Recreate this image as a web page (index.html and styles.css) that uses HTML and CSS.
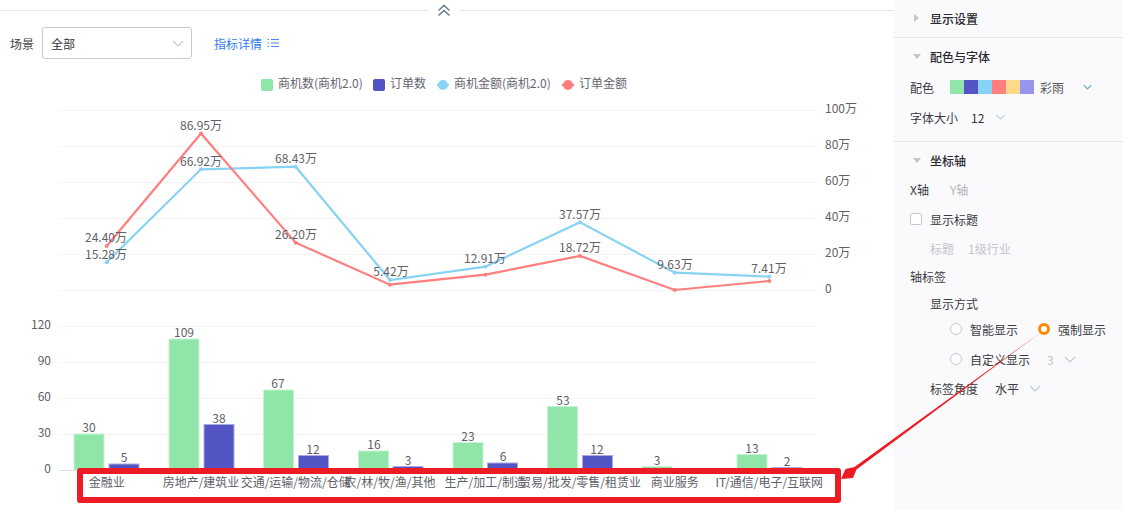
FILE: index.html
```html
<!DOCTYPE html>
<html lang="zh">
<head>
<meta charset="utf-8">
<title>图表</title>
<link rel="stylesheet" href="styles.css">
</head>
<body>
<div class="page">
  <main class="main">
    <div class="collapse">
      <span class="collapse-line line-left"></span>
      <svg class="collapse-icon" viewBox="0 0 14 14" width="14" height="14"><path d="M1.500 6.500 7 1.500l5.500 5M1.500 11.500 7 6.500l5.500 5"/></svg>
      <span class="collapse-line line-right"></span>
    </div>
    <div class="toolbar">
      <span class="scene-label">场景</span>
      <div class="select"><span>全部</span>
        <svg class="chev" viewBox="0 0 12 7" width="12" height="7"><path d="M1 1l5 5 5-5"/></svg>
      </div>
      <a class="detail">指标详情
        <svg viewBox="0 0 12 10" width="12" height="10"><path d="M4 1.500h8M4 5h8M4 8.500h8M0.500 1.500h1.500M0.500 5h1.500M0.500 8.500h1.500"/></svg>
      </a>
    </div>
    <svg class="chart" viewBox="0 0 894 440" width="894" height="440">
      <!-- chart coordinates = page coordinates shifted up by 70px -->
      <g transform="translate(0 -70)">
        <g class="legend">
          <rect x="261" y="79" width="12" height="12" rx="2" fill="#8fe6a8"/><text x="278" y="88">商机数(商机2.0)</text>
          <rect x="373" y="79" width="12" height="12" rx="2" fill="#5355c5"/><text x="390" y="88">订单数</text>
          <path d="M437 85h12" class="lg-blue"/><circle cx="443" cy="85" r="5" fill="#88d3f3"/><text x="454" y="88">商机金额(商机2.0)</text>
          <path d="M562 85h12" class="lg-red"/><circle cx="568" cy="85" r="5" fill="#ff7f7f"/><text x="579" y="88">订单金额</text>
        </g>
        <g class="grid">
          <path d="M59 110.500H816M59 146.500H816M59 182.500H816M59 218.500H816M59 254.500H816M59 290.500H816"/>
          <path d="M59 326.500H816M59 362.500H816M59 398.500H816M59 434.500H816"/>
        </g>
        <path class="base" d="M59 470.500H816"/>
        <g class="axis axis-r">
          <text x="825" y="113">100万</text><text x="825" y="149">80万</text><text x="825" y="185">60万</text>
          <text x="825" y="221">40万</text><text x="825" y="257">20万</text><text x="825" y="293">0</text>
        </g>
        <g class="axis axis-l">
          <text x="51" y="329">120</text><text x="51" y="365">90</text><text x="51" y="401">60</text>
          <text x="51" y="437">30</text><text x="51" y="473">0</text>
        </g>
        <polyline class="line-blue" points="106.700,262.300 201,169.300 295.700,166.700 390,280 485.300,266.700 580,222.300 674.700,272.700 769.300,276.700"/>
        <polyline class="line-red" points="106.700,246 201,133.500 295.700,242.700 390,284.700 485.300,274.700 580,256 674.700,290 769.300,281"/>
        <g fill="#88d3f3">
          <circle cx="106.700" cy="262.300" r="2"/><circle cx="201" cy="169.300" r="2"/><circle cx="295.700" cy="166.700" r="2"/><circle cx="390" cy="280" r="2"/>
          <circle cx="485.300" cy="266.700" r="2"/><circle cx="580" cy="222.300" r="2"/><circle cx="674.700" cy="272.700" r="2"/><circle cx="769.300" cy="276.700" r="2"/>
        </g>
        <g fill="#ff7f7f">
          <circle cx="106.700" cy="246" r="2"/><circle cx="201" cy="133.500" r="2"/><circle cx="295.700" cy="242.700" r="2"/><circle cx="390" cy="284.700" r="2"/>
          <circle cx="485.300" cy="274.700" r="2"/><circle cx="580" cy="256" r="2"/><circle cx="674.700" cy="290" r="2"/><circle cx="769.300" cy="281" r="2"/>
        </g>
        <g class="val">
          <text x="106" y="242">24.40万</text><text x="106" y="259">15.28万</text>
          <text x="201" y="130">86.95万</text><text x="201" y="166">66.92万</text>
          <text x="296" y="163">68.43万</text><text x="296" y="239">26.20万</text>
          <text x="391" y="276">5.42万</text><text x="485" y="263">12.91万</text>
          <text x="580" y="219">37.57万</text><text x="580" y="252">18.72万</text>
          <text x="675" y="269">9.63万</text><text x="769" y="273">7.41万</text>
        </g>
        <g class="bars-a">
          <rect x="74" y="434" width="30" height="36"/><rect x="169" y="339" width="30" height="131"/>
          <rect x="263.500" y="390" width="30" height="80"/><rect x="358.500" y="451" width="30" height="19"/>
          <rect x="453" y="442.500" width="30" height="27.500"/><rect x="547.500" y="406.500" width="30" height="63.500"/>
          <rect x="642" y="466.500" width="30" height="3.500"/><rect x="737" y="454.500" width="30" height="15.500"/>
        </g>
        <g class="bars-b">
          <rect x="109" y="464" width="30" height="6"/><rect x="204" y="424.500" width="30" height="45.500"/>
          <rect x="298.500" y="455.500" width="30" height="14.500"/><rect x="393" y="466.500" width="30" height="3.500"/>
          <rect x="487.500" y="463" width="30" height="7"/><rect x="582.500" y="455.500" width="30" height="14.500"/>
          <rect x="772" y="467.500" width="30" height="2.500"/>
        </g>
        <g class="val">
          <text x="89" y="432">30</text><text x="124" y="462">5</text>
          <text x="184" y="337">109</text><text x="219" y="423">38</text>
          <text x="278" y="388">67</text><text x="313" y="454">12</text>
          <text x="374" y="449">16</text><text x="408" y="465">3</text>
          <text x="468" y="441">23</text><text x="503" y="461">6</text>
          <text x="563" y="405">53</text><text x="597" y="454">12</text>
          <text x="657" y="465">3</text><text x="752" y="453">13</text><text x="787" y="466">2</text>
        </g>
        <g class="cat">
          <text x="106.700" y="487">金融业</text><text x="201" y="487">房地产/建筑业</text>
          <text x="295.700" y="487">交通/运输/物流/仓储</text><text x="390" y="487">农/林/牧/渔/其他</text>
          <text x="485.300" y="487">生产/加工/制造</text><text x="580" y="487">贸易/批发/零售/租赁业</text>
          <text x="674.700" y="487">商业服务</text><text x="769.300" y="487">IT/通信/电子/互联网</text>
        </g>
      </g>
    </svg>
  </main>
  <aside class="panel">
    <section class="sect sect-first">
      <h3 class="sect-title"><span class="tri-r"></span>显示设置</h3>
    </section>
    <section class="sect sect-color">
      <h3 class="sect-title"><span class="tri-d"></span>配色与字体</h3>
      <div class="row row-color">
        <span class="lbl">配色</span>
        <div class="swatches"><i class="s1"></i><i class="s2"></i><i class="s3"></i><i class="s4"></i><i class="s5"></i><i class="s6"></i></div>
        <span class="scheme">彩雨</span>
        <svg class="chev blue" viewBox="0 0 12 7" width="9" height="6"><path d="M1 1l5 5 5-5"/></svg>
      </div>
      <div class="row row-size">
        <span class="lbl">字体大小</span><span class="size">12</span>
        <svg class="chev" viewBox="0 0 12 7" width="11" height="6"><path d="M1 1l5 5 5-5"/></svg>
      </div>
    </section>
    <section class="sect-axis">
      <h3 class="sect-title"><span class="tri-d"></span>坐标轴</h3>
      <div class="row tabs"><span class="tab-on">X轴</span><span class="tab-off">Y轴</span></div>
      <div class="row check-row"><span class="check"></span><span class="lbl">显示标题</span></div>
      <div class="row title-row"><span>标题</span><span>1级行业</span></div>
      <div class="row axis-label"><span class="lbl">轴标签</span></div>
      <div class="row mode"><span class="lbl">显示方式</span></div>
      <div class="row radios">
        <span class="radio"></span><span class="lbl r-text">智能显示</span>
        <span class="radio on"></span><span class="lbl">强制显示</span>
      </div>
      <div class="row radios radios-2">
        <span class="radio"></span><span class="lbl r-text2">自定义显示</span><span class="num">3</span>
        <svg class="chev" viewBox="0 0 12 7" width="12" height="7"><path d="M1 1l5 5 5-5"/></svg>
      </div>
      <div class="row angle">
        <span class="lbl">标签角度</span><span class="lbl angle-val">水平</span>
        <svg class="chev" viewBox="0 0 12 7" width="12" height="7"><path d="M1 1l5 5 5-5"/></svg>
      </div>
    </section>
  </aside>
  <div class="redbox"></div>
  <svg class="arrow" viewBox="0 0 1123 510" width="1123" height="510">
    <polygon points="1044,330 856.500,469.500 853,478 841,479 845.500,469 854.500,467"/>
  </svg>
</div>
</body>
</html>
```
FILE: styles.css
```css
* { box-sizing: border-box; }
html, body { margin: 0; padding: 0; background: #fff; }
body { font-family: "Noto Sans CJK SC", "Noto Sans", sans-serif; font-size: 12px; color: #333; overflow: hidden; }
.page { position: relative; display: flex; width: 1123px; height: 510px; overflow: hidden; }
.main { width: 894px; flex: none; }
.collapse { display: flex; align-items: center; height: 21px; gap: 8px; }
.collapse-line { height: 1px; background: #e3e3ec; }
.line-left { flex: none; width: 429px; }
.line-right { flex: 1; }
.collapse-icon { flex: none; fill: none; stroke: #5d7284; stroke-width: 1.300; }
.toolbar { display: flex; align-items: center; height: 49px; padding: 0 0 5px 10px; }
.scene-label { margin-right: 8px; color: #444; }
.select { width: 150px; height: 32px; border: 1px solid #c8c8d4; border-radius: 3px; display: flex; align-items: center; justify-content: space-between; padding: 0 7px 0 8px; color: #333; }
.detail { display: flex; align-items: center; gap: 5px; margin-left: 22px; color: #2f7bf5; }
.detail svg { fill: none; stroke: #4e83f5; stroke-width: 1; }
.chev { fill: none; stroke: #c4c8d4; stroke-width: 1.200; flex: none; }
.chev.blue { stroke: #6ea4c8; stroke-width: 1.600; }
.chart { display: block; }
.chart text { font-family: "Noto Sans CJK SC", "Noto Sans", sans-serif; font-size: 12px; fill: #5f5f68; }
.legend text { fill: #666670; }
.lg-blue { stroke: #88d3f3; stroke-width: 2; }
.lg-red { stroke: #ff7f7f; stroke-width: 2; }
.grid path { stroke: #f3f3f6; stroke-width: 1; fill: none; }
.base { stroke: #dcdce8; stroke-width: 1; fill: none; }
.axis-l text { text-anchor: end; }
.line-blue { fill: none; stroke: #88d3f3; stroke-width: 2.200; }
.line-red { fill: none; stroke: #ff7f7f; stroke-width: 2.200; }
.val text, .cat text { text-anchor: middle; }
.bars-a rect { fill: #8fe6a8; stroke: #c7f2d3; stroke-width: 1; }
.bars-b rect { fill: #5355c5; stroke: #a9aae2; stroke-width: 1; }
.panel { flex: 1; background: #fafafc; font-size: 12px; color: #333; }
.sect { border-bottom: 1px solid #e4e4ea; }
.sect-first { height: 38px; }
.sect-color { height: 104px; }
.sect-title { margin: 0; display: flex; align-items: center; height: 36px; padding-left: 19px; font-size: 12px; font-weight: 500; color: #2b2b33; gap: 9px; }
.tri-r { width: 0; height: 0; border-left: 5px solid #c3c3cc; border-top: 4px solid transparent; border-bottom: 4px solid transparent; margin: 0 2px 0 1px; }
.tri-d { width: 0; height: 0; border-top: 5px solid #c3c3cc; border-left: 4px solid transparent; border-right: 4px solid transparent; }
.row { display: flex; align-items: center; padding-left: 16px; }
.lbl { color: #3a3a42; }
.row-color { height: 26px; }
.swatches { display: flex; margin-left: 16px; }
.swatches i { display: block; width: 14px; height: 14px; }
.s1 { background: #8fe6a8; } .s2 { background: #5355c5; } .s3 { background: #88d3f3; }
.s4 { background: #ff7f7f; } .s5 { background: #ffd98a; } .s6 { background: #9595ee; }
.scheme { margin-left: 6px; color: #55555e; width: 43px; }
.row-size { height: 34px; }
.size { margin-left: 13px; margin-right: 11px; }
.tabs { height: 22px; gap: 21px; }
.tab-on { color: #3a3a42; }
.tab-off { color: #b4b4c0; }
.check-row { height: 22px; margin-top: 8px; gap: 8px; }
.check { width: 12px; height: 12px; border: 1px solid #c8c8d4; border-radius: 2px; background: #fff; }
.title-row { height: 22px; margin-top: 7px; padding-left: 36px; gap: 14px; color: #c3c3cc; }
.axis-label { height: 22px; margin-top: 6px; }
.mode { height: 22px; margin-top: 5px; padding-left: 36px; }
.radios { height: 22px; margin-top: 4px; padding-left: 56px; }
.radios-2 { margin-top: 8px; }
.radio { width: 12px; height: 12px; border: 1px solid #c8c8d4; border-radius: 50%; background: #fff; flex: none; }
.radio.on { border: 3px solid #ff8a00; }
.r-text { margin-left: 8px; margin-right: 20px; }
.r-text + .radio + .lbl { margin-left: 8px; }
.r-text2 { margin-left: 8px; }
.num { margin-left: 17px; margin-right: 10px; color: #c3c3cc; }
.angle { height: 22px; margin-top: 7px; padding-left: 36px; }
.angle-val { margin-left: 17px; margin-right: 10px; }
.redbox { position: absolute; left: 77px; top: 468px; width: 764px; height: 35px; border: 6px solid #ed1c24; border-radius: 3px; }
.arrow { position: absolute; left: 0; top: 0; pointer-events: none; }
.arrow polygon { fill: #ed1c24; }
```
